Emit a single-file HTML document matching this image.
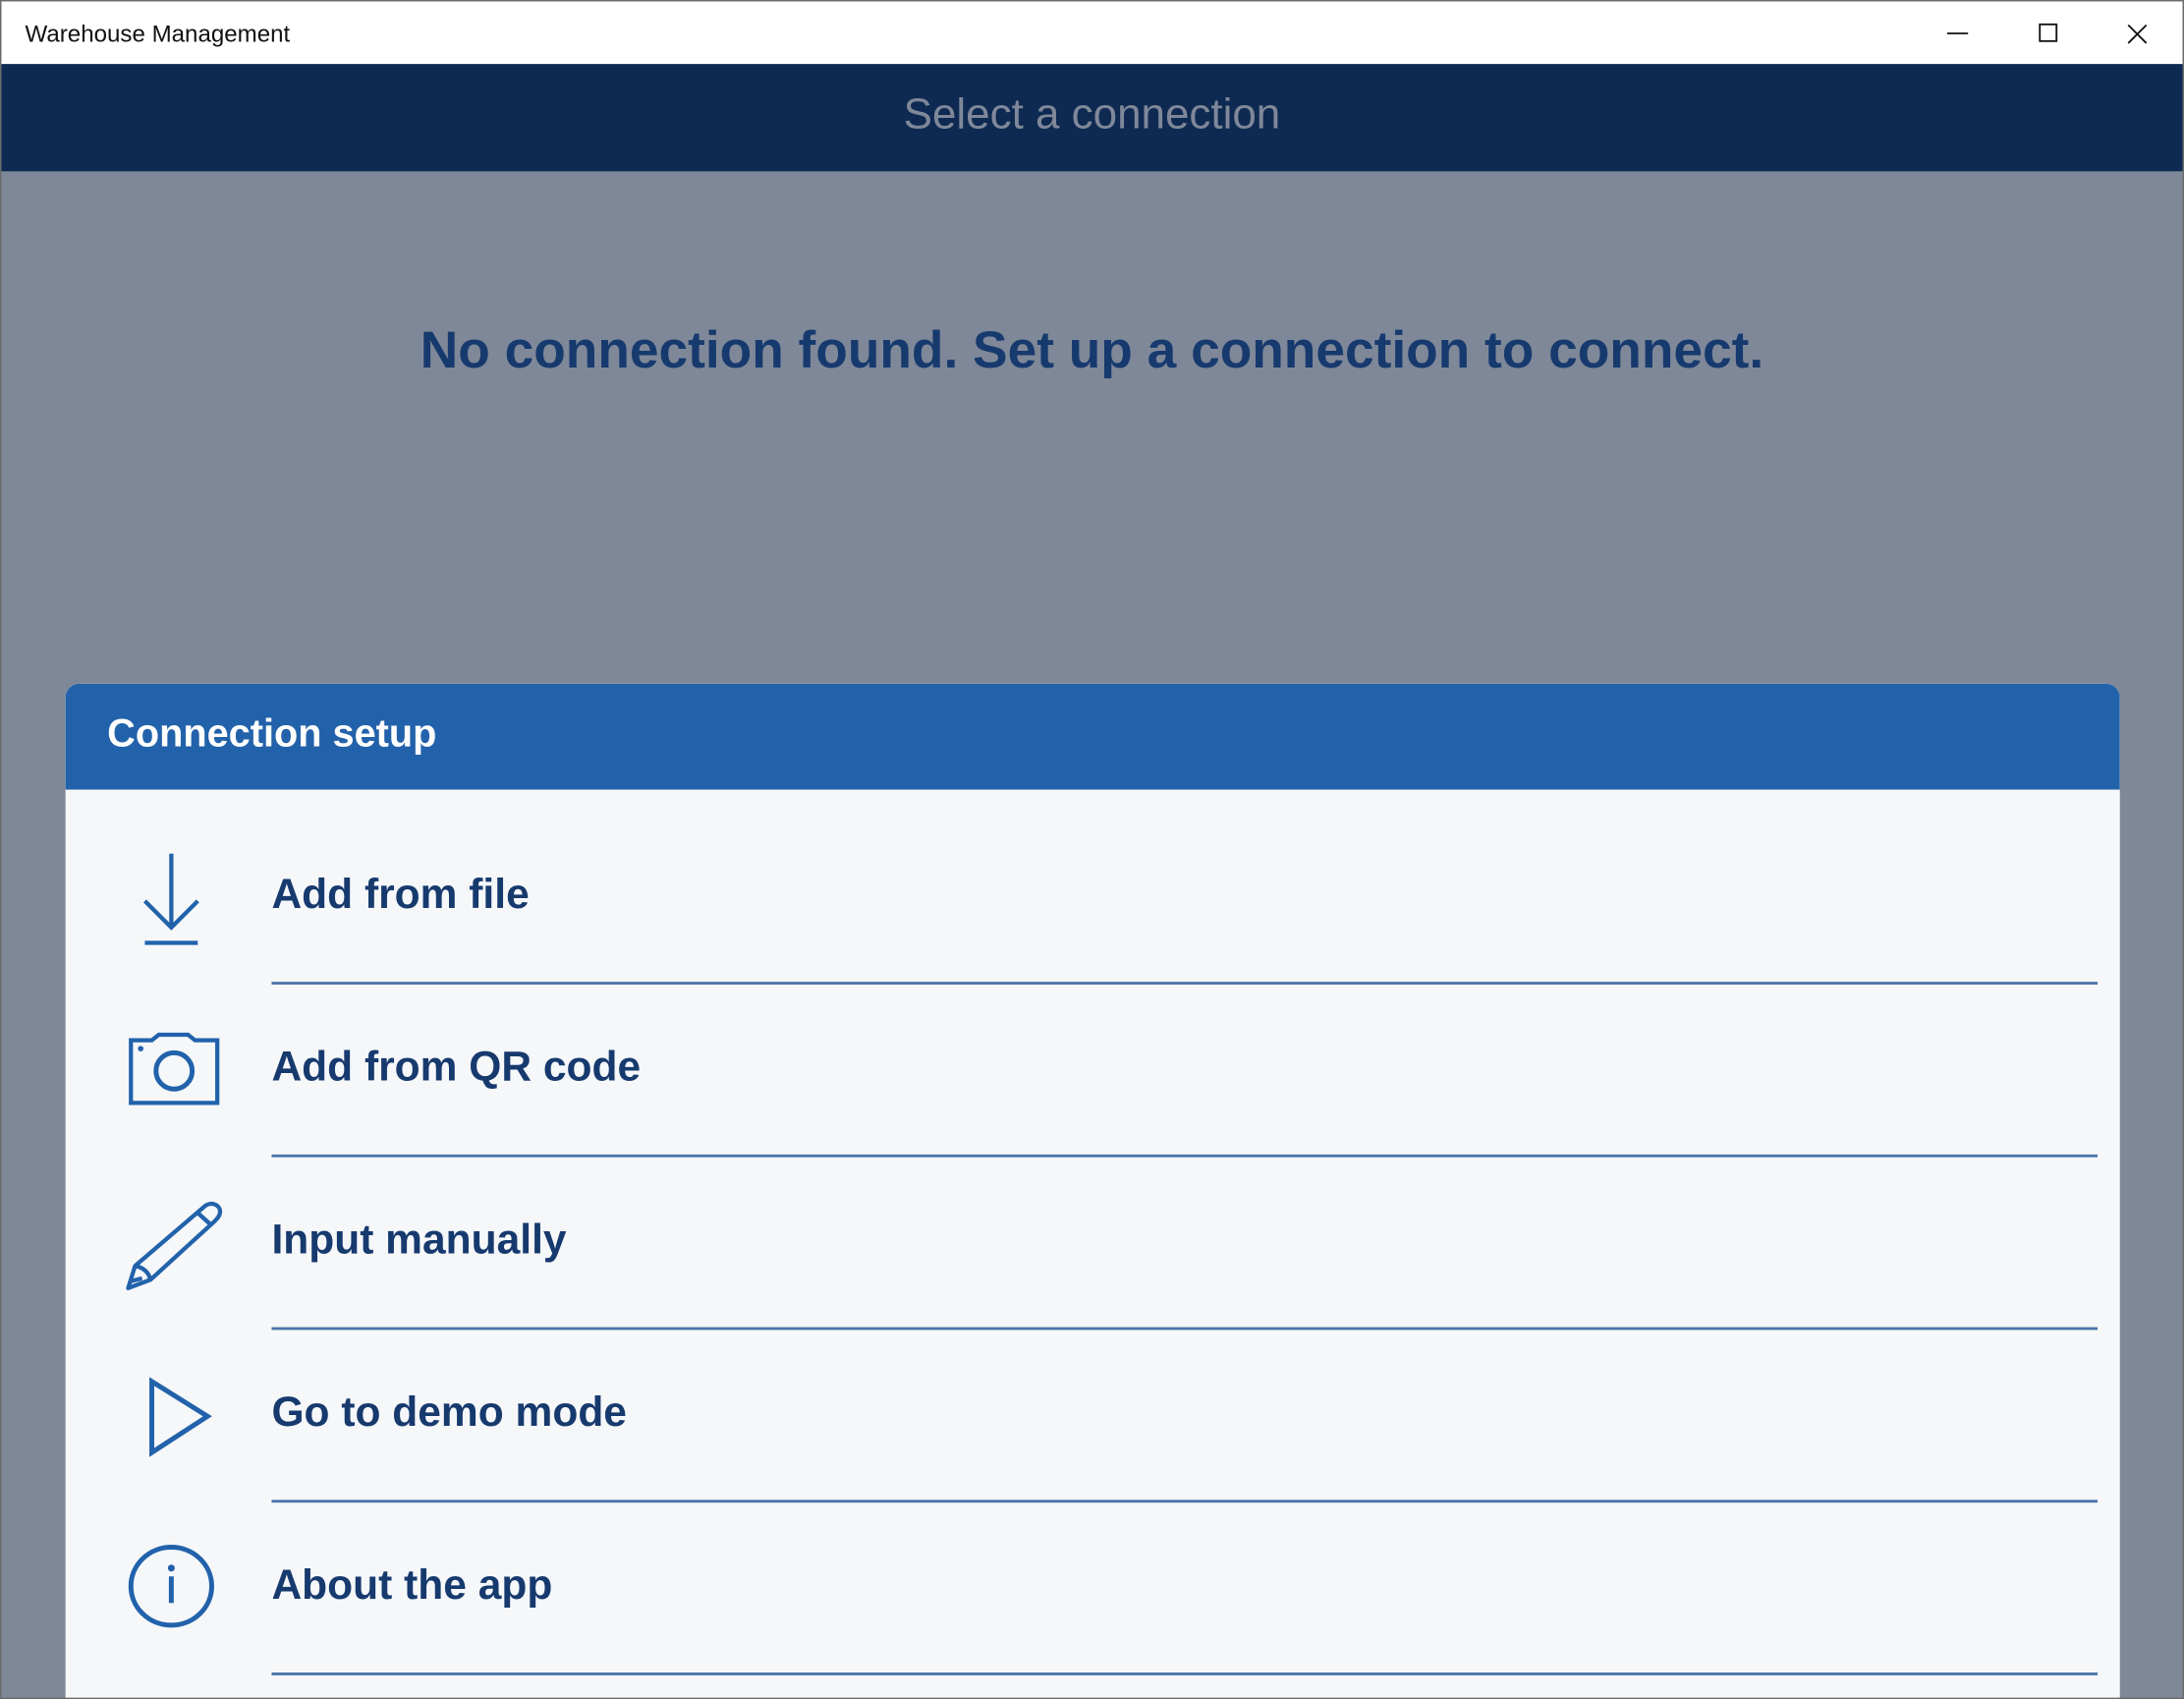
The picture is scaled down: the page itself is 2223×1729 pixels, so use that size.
<!DOCTYPE html>
<html><head><meta charset="utf-8"><style>
html,body{margin:0;padding:0;width:2223px;height:1729px;overflow:hidden;background:#7f8899}
#w{position:absolute;left:0;top:0;width:1568px;height:1220px;transform:scale(1.4177,1.4172);transform-origin:0 0;font-family:"Liberation Sans",sans-serif;background:#7f8899;border:1px solid #6b6b6b;box-sizing:border-box;overflow:hidden}
.tb{position:absolute;left:0;top:0;width:1566px;height:45px;background:#fff}
.tb span{position:absolute;left:17px;top:14px;font-size:17px;color:#111}
.hd{position:absolute;left:0;top:45px;width:1566px;height:77px;background:#0e2a52;text-align:center;line-height:72px;font-size:31px;color:#7f8899}
.msg{position:absolute;left:0;width:1566px;top:229px;text-align:center;font-size:37.6px;font-weight:bold;color:#173a6e}
.panel{position:absolute;left:46px;top:490px;width:1475px;height:740px;background:#f5f7f9;border-radius:10px 10px 0 0;overflow:hidden}
.ph{height:76px;background:#2262ab;color:#fff;font-size:28px;font-weight:bold;line-height:72px;padding-left:30px}
.row{position:absolute;left:0;width:1475px;height:124px}
.row .t{position:absolute;left:148px;top:44px;font-size:30px;font-weight:bold;color:#173a6e}
.row .l{position:absolute;left:148px;width:1311px;top:123px;height:1.5px;background:#4a74a8}
.row svg{position:absolute;left:40px;top:0}
</style></head><body><div id="w">
<div class="tb"><span>Warehouse Management</span>
<svg style="position:absolute;left:1390px;top:10px" width="160" height="26"><line x1="7" y1="13" x2="22" y2="13" stroke="#111" stroke-width="1.3"/><rect x="73.5" y="6.5" width="12" height="12" fill="none" stroke="#111" stroke-width="1.3"/><path d="M137 7L150 20M150 7L137 20" stroke="#111" stroke-width="1.3"/></svg></div>
<div class="hd">Select a connection</div>
<div class="msg">No connection found. Set up a connection to connect.</div>
<div class="panel"><div class="ph">Connection setup</div>
<div class="row" style="top:91px"><svg width="80" height="124" viewBox="0 0 80 124"><path d="M36 31V84M17 65L36 84L55 65" fill="none" stroke="#2262ab" stroke-width="3"/><line x1="17" y1="95" x2="55" y2="95" stroke="#2262ab" stroke-width="3"/></svg><div class="t">Add from file</div><div class="l"></div></div>
<div class="row" style="top:215px"><svg width="80" height="124" viewBox="0 0 80 124"><path d="M7 41H22L27 37H48L53 41H69V86H7Z" fill="none" stroke="#2262ab" stroke-width="3"/><circle cx="38" cy="63" r="13" fill="none" stroke="#2262ab" stroke-width="3.5"/><circle cx="14" cy="47" r="2" fill="#2262ab"/></svg><div class="t">Add from QR code</div><div class="l"></div></div>
<div class="row" style="top:339px"><svg width="80" height="124" viewBox="0 0 80 124"><path d="M5 95L10 79L59 37C64 32 71 35 71 40C71 43 69 45 67 47L21 89Z" fill="none" stroke="#2262ab" stroke-width="3" stroke-linejoin="round"/><path d="M10 79C16 80 20 84 21 89M55 41L65 50M7 90L15 88" fill="none" stroke="#2262ab" stroke-width="3"/></svg><div class="t">Input manually</div><div class="l"></div></div>
<div class="row" style="top:463px"><svg width="80" height="124" viewBox="0 0 80 124"><path d="M22 38V89L62 63Z" fill="none" stroke="#2262ab" stroke-width="3.5"/></svg><div class="t">Go to demo mode</div><div class="l"></div></div>
<div class="row" style="top:587px"><svg width="80" height="124" viewBox="0 0 80 124"><ellipse cx="36" cy="61" rx="29" ry="28" fill="none" stroke="#2262ab" stroke-width="3.5"/><circle cx="36" cy="48" r="2.5" fill="#2262ab"/><line x1="36" y1="54" x2="36" y2="73" stroke="#2262ab" stroke-width="3.5"/></svg><div class="t">About the app</div><div class="l"></div></div>
</div>
</div></body></html>
